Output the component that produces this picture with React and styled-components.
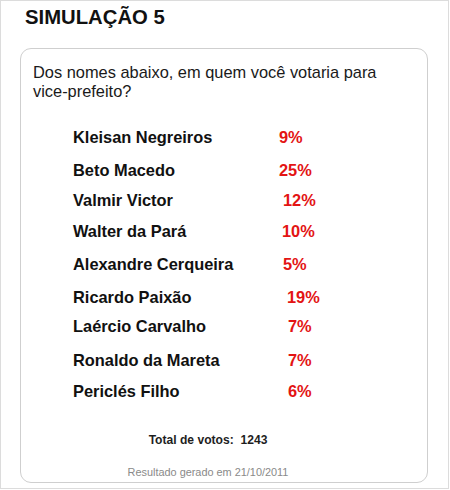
import React from "react";
import styled, { createGlobalStyle } from "styled-components";

const Global = createGlobalStyle`
  html, body { margin: 0; padding: 0; background: #fff; }
  body { font-family: "Liberation Sans", Arial, sans-serif; }
`;

const Frame = styled.div`
  box-sizing: border-box;
  width: 449px;
  height: 489px;
  border: 1px solid #dcdcdc;
  padding: 4px 21px 0 19px;
`;

const Title = styled.h1`
  margin: 0 0 0 5px;
  font-size: 20.3px;
  line-height: 24px;
  font-weight: bold;
  color: #111;
`;

const Card = styled.div`
  box-sizing: border-box;
  margin-top: 19px;
  width: 408px;
  height: 435px;
  border: 1px solid #cfcfcf;
  border-radius: 11px;
  padding: 14px 12px 0 12px;
  display: flex;
  flex-direction: column;
`;

const Question = styled.p`
  margin: 0;
  font-size: 16.4px;
  line-height: 19px;
  color: #1a1a1a;
`;

const List = styled.div`
  margin-top: 26px;
  margin-left: 40px;
  display: flex;
  flex-direction: column;
`;

const Row = styled.div`
  display: grid;
  grid-template-columns: 206px auto;
  height: 20px;
  line-height: 20px;
  margin-top: ${(p) => p.$gap}px;
  font-size: 16.4px;
  font-weight: bold;
`;

const Name = styled.span`
  color: #111;
  white-space: nowrap;
`;

const Pct = styled.span`
  color: #e31414;
  padding-left: ${(p) => p.$shift}px;
`;

const Total = styled.div`
  margin-top: 32px;
  padding-right: 32px;
  text-align: center;
  font-size: 12.1px;
  line-height: 15px;
  font-weight: bold;
  color: #1e1e1e;
  white-space: pre;
`;

const Stamp = styled.div`
  margin-top: 17px;
  padding-right: 32px;
  text-align: center;
  font-size: 10.9px;
  line-height: 14px;
  color: #8a8a8a;
`;

const rows = [
  ["Kleisan Negreiros", "9%", 0, 0],
  ["Beto Macedo", "25%", 13, 0],
  ["Valmir Victor", "12%", 10, 4],
  ["Walter da Pará", "10%", 11, 3],
  ["Alexandre Cerqueira", "5%", 13, 4],
  ["Ricardo Paixão", "19%", 13, 8],
  ["Laércio Carvalho", "7%", 9, 9],
  ["Ronaldo da Mareta", "7%", 14, 9],
  ["Periclés Filho", "6%", 11, 9],
];

export default function App() {
  return (
    <>
      <Global />
      <Frame>
        <Title>SIMULAÇÃO 5</Title>
        <Card>
          <Question>
            Dos nomes abaixo, em quem você votaria para
            <br />
            vice-prefeito?
          </Question>
          <List>
            {rows.map(([name, pct, gap, shift]) => (
              <Row key={name} $gap={gap}>
                <Name>{name}</Name>
                <Pct $shift={shift}>{pct}</Pct>
              </Row>
            ))}
          </List>
          <Total>{"Total de votos:  1243"}</Total>
          <Stamp>Resultado gerado em 21/10/2011</Stamp>
        </Card>
      </Frame>
    </>
  );
}
